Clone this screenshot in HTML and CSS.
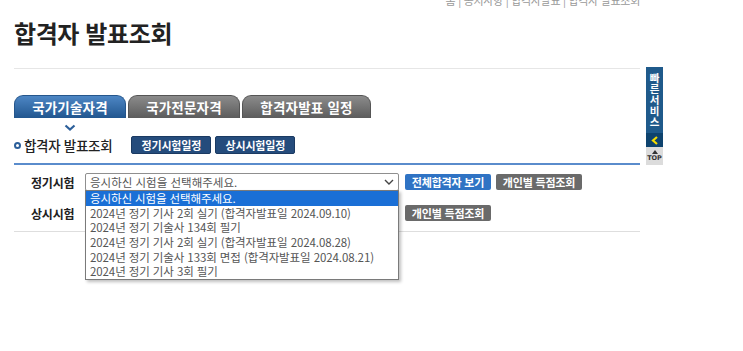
FILE: index.html
```html
<!DOCTYPE html>
<html lang="ko">
<head>
<meta charset="utf-8">
<title>합격자 발표조회</title>
<link rel="stylesheet" href="styles.css">
</head>
<body>
<div class="page">
  <div class="crumb">홈 | 공지사항 | 합격자발표 | 합격자 발표조회</div>
  <h1 class="title">합격자 발표조회</h1>
  <div class="rule"></div>
  <nav class="tabs">
    <a class="tab active">국가기술자격</a>
    <a class="tab">국가전문자격</a>
    <a class="tab wide">합격자발표 일정</a>
  </nav>
  <div class="chev"><svg width="12" height="7" viewBox="0 0 12 7"><path d="M1.5 1.5 L6 5.5 L10.5 1.5" fill="none" stroke="#2c5f9a" stroke-width="2.2"/></svg></div>
  <div class="subhead">
    <span class="bullet"></span>
    <span class="subtitle">합격자 발표조회</span>
    <a class="btn navy">정기시험일정</a>
    <a class="btn navy">상시시험일정</a>
  </div>
  <div class="blue-rule"></div>
  <div class="form">
    <div class="row">
      <span class="label">정기시험</span>
      <div class="select-wrap top">
        <div class="select">응시하신 시험을 선택해주세요.<svg class="arrow" width="10" height="6" viewBox="0 0 10 6"><path d="M1 1 L5 5 L9 1" fill="none" stroke="#444" stroke-width="1.4"/></svg></div>
        <ul class="options">
          <li class="sel">응시하신 시험을 선택해주세요.</li>
          <li>2024년 정기 기사 2회 실기 (합격자발표일 2024.09.10)</li>
          <li>2024년 정기 기술사 134회 필기</li>
          <li>2024년 정기 기사 2회 실기 (합격자발표일 2024.08.28)</li>
          <li>2024년 정기 기술사 133회 면접 (합격자발표일 2024.08.21)</li>
          <li>2024년 정기 기사 3회 필기</li>
        </ul>
      </div>
      <a class="btn blue">전체합격자 보기</a>
      <a class="btn gray">개인별 득점조회</a>
    </div>
    <div class="row">
      <span class="label">상시시험</span>
      <div class="select-wrap">
        <div class="select"></div>
      </div>
      <a class="btn gray">개인별 득점조회</a>
    </div>
  </div>
  <div class="gray-rule"></div>
</div>
<aside class="quick">
  <div class="quick-label">빠른서비스</div>
  <div class="quick-toggle"><svg width="8" height="9" viewBox="0 0 8 9"><path d="M6 1 L2 4.5 L6 8" fill="none" stroke="#f4dc00" stroke-width="2.2"/></svg></div>
  <div class="quick-top"><svg width="6" height="4" viewBox="0 0 6 4"><path d="M0 4 L3 0 L6 4Z" fill="#333"/></svg><span>TOP</span></div>
</aside>
</body>
</html>
```
FILE: styles.css
```css
* { box-sizing: border-box; }
html, body { margin: 0; padding: 0; background: #fff; }
body {
  font-family: "Noto Sans CJK KR", "Noto Sans", sans-serif;
  color: #222;
}
.page {
  width: 626px;
  margin-left: 14px;
  padding-top: 1px;
  min-height: 340px;
}
.crumb {
  height: 12px;
  margin-top: -7px;
  font-size: 11px;
  line-height: 12px;
  color: #999;
  text-align: right;
  letter-spacing: -0.3px;
}
.title {
  margin: 12px 0 0 0;
  font-size: 24px;
  line-height: 30px;
  font-weight: 700;
  color: #222;
  letter-spacing: -0.4px;
  height: 30px;
}
.rule {
  margin-top: 20px;
  height: 1px;
  background: #e6e6e6;
}
.tabs {
  display: flex;
  gap: 2px;
  margin-top: 26px;
  height: 23px;
}
.tab {
  display: flex;
  align-items: center;
  justify-content: center;
  width: 112px;
  height: 23px;
  border-radius: 9px 9px 0 0;
  color: #fff;
  font-size: 13.5px;
  font-weight: 700;
  background: linear-gradient(#8b8b8b, #5c5c5c);
  border: 1px solid #555;
  border-bottom: none;
  letter-spacing: 0.2px;
}
.tab.active {
  background: linear-gradient(#4d86c4, #21568f);
  border-color: #25568c;
}
.tab.wide { width: 129px; }
.chev {
  height: 13px;
  padding-left: 50px;
  display: flex;
  align-items: flex-end;
}
.subhead {
  display: flex;
  align-items: center;
  height: 18px;
  margin-top: 5px;
}
.bullet {
  width: 7px;
  height: 7px;
  border: 2px solid #2c5f9a;
  border-radius: 50%;
  margin-right: 3px;
}
.subtitle {
  font-size: 13.5px;
  font-weight: 500;
  color: #222;
  margin-right: 19px;
  letter-spacing: -0.3px;
}
.btn {
  display: inline-flex;
  align-items: center;
  justify-content: center;
  height: 16px;
  color: #fff;
  font-size: 11px;
  font-weight: 700;
  border-radius: 2px;
  white-space: nowrap;
  letter-spacing: -0.2px;
}
.btn.navy {
  height: 18px;
  width: 80px;
  background: #254c7c;
  border: 1px solid #1b3a62;
  margin-right: 4px;
}
.blue-rule {
  margin-top: 9px;
  height: 2px;
  background: #5a8ccc;
}
.form {
  padding: 8px 0 0 17px;
}
.row {
  display: flex;
  align-items: center;
  height: 18px;
  margin-bottom: 13px;
}
.label {
  width: 54px;
  font-size: 12px;
  font-weight: 700;
  color: #222;
  letter-spacing: -0.2px;
}
.select-wrap {
  position: relative;
  width: 314px;
  height: 18px;
  margin-right: 6px;
}
.select-wrap.top { z-index: 5; }
.select {
  height: 18px;
  border: 1px solid #8f8f8f;
  border-radius: 2px;
  font-size: 11.5px;
  line-height: 16px;
  color: #555;
  padding-left: 4px;
  position: relative;
  background: #fff;
}
.arrow {
  position: absolute;
  right: 4px;
  top: 5px;
}
.options {
  position: absolute;
  left: 0;
  top: 17px;
  width: 314px;
  margin: 0;
  padding: 0;
  list-style: none;
  background: #fff;
  border: 1px solid #7a7a7a;
  box-shadow: 2px 2px 3px rgba(0,0,0,0.25);
}
.options li {
  height: 14.67px;
  font-size: 11.5px;
  line-height: 14.67px;
  color: #555;
  padding-left: 4px;
  white-space: nowrap;
  letter-spacing: -0.1px;
}
.options li.sel {
  background: #1a6fd6;
  color: #fff;
}
.btn.blue {
  width: 86px;
  background: #2f73c4;
  margin-right: 5px;
}
.btn.gray {
  width: 86px;
  background: #6a6a6a;
}
.gray-rule {
  margin-top: -4px;
  height: 1px;
  background: #dedede;
}
.quick {
  position: absolute;
  left: 646px;
  top: 67px;
  width: 17px;
}
.quick-label {
  height: 66px;
  background: #1f5a8b;
  color: #fff;
  font-size: 10.5px;
  font-weight: 700;
  writing-mode: vertical-rl;
  text-orientation: upright;
  display: flex;
  align-items: center;
  justify-content: center;
  letter-spacing: 0.5px;
  line-height: 17px;
}
.quick-toggle {
  height: 14px;
  background: #0e436e;
  display: flex;
  align-items: center;
  justify-content: center;
}
.quick-top {
  height: 18px;
  background: #dcdcdc;
  display: flex;
  flex-direction: column;
  align-items: center;
  justify-content: center;
  font-size: 6.5px;
  font-weight: 700;
  color: #333;
  line-height: 7px;
  font-family: "DejaVu Sans", sans-serif;
}
.quick-top svg { margin-bottom: 1px; }
```
